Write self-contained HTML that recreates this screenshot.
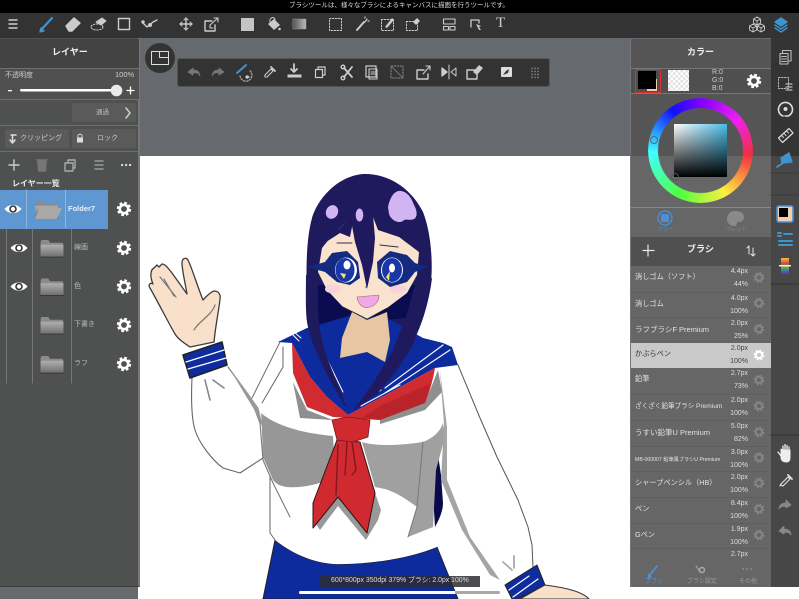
<!DOCTYPE html>
<html><head><meta charset="utf-8"><style>
*{margin:0;padding:0;box-sizing:border-box}
html,body{width:799px;height:599px;overflow:hidden;background:#fff;font-family:"Liberation Sans","Noto Sans CJK JP",sans-serif}
.a{position:absolute}
.t{position:absolute;white-space:nowrap;line-height:1}
svg{position:absolute;left:0;top:0}
.row{position:absolute;left:631px;width:140px;height:25.7px;color:#e2e2e2;border-top:1px solid #5f5f5f}
.row b{position:absolute;left:4px;top:7px;font-weight:normal;font-size:7.2px;white-space:nowrap;line-height:1.2}
.row i{position:absolute;right:23px;font-style:normal;font-size:7px;color:#ddd;line-height:1}
.row i.u{top:2px}.row i.d{top:15px}
.sep{position:absolute;height:1px;background:#6f6f6f}
</style></head><body>
<div class="a" style="left:0;top:38px;width:799px;height:118px;background:#66696e"></div>
<div class="a" style="left:0;top:587px;width:138px;height:12px;background:#666a6e"></div>

<svg width="799" height="599" viewBox="0 0 799 599" stroke-linejoin="round" stroke-linecap="round">
<!-- skirt -->
<path d="M275 540C290 552 310 562 333 564C370 565 410 558 437 547L458 599H263Z" fill="#0d2b9c" stroke="#222" stroke-width="1"/>
<!-- torso -->
<path d="M280 342L262 372L252 398L262 407L270 467L270 533L275 540C290 552 310 562 333 564C370 565 410 558 437 547L445 437L447 370L400 350L340 358Z" fill="#fff"/>
<!-- dark hair strip -->
<path d="M438 455C434 465 433 480 433 495L435 527C440 518 443 510 443 503L441 475Z" fill="#0a0a4a"/>
<!-- gray shade -->
<path d="M261 413C275 425 300 433 333 436L335 470L323 482C310 486 298 488 287 487C280 486 276 484 273 480L263 457Z" fill="#979797"/>
<path d="M362 442C375 446 395 446 423 442C433 438 440 432 443 423L445 437L436 470L433 527L408 537L417 507C405 498 395 492 385 489L375 487Z" fill="#a0a0a0"/>
<path d="M316 524L338 497L367 533L375 493L381 510L378 520L366 540L338 506L320 530Z" fill="#999"/>
<path d="M293 382L307 410L333 420L300 418ZM380 420L425 403L438 370L442 392L425 410L380 424Z" fill="#8f8f8f"/>
<!-- left sleeve -->
<path d="M192 378L193 427L200 443L223 468L240 473L263 458L261 410L227 365Z" fill="#fff"/>
<path d="M192 378C191 400 192 420 195 430C199 443 212 460 223 468L240 473L263 458" fill="none" stroke="#666" stroke-width="1.100"/>
<path d="M228 367L250 397L260 423L263 460L273 483L290 517M252 398L280 342" fill="none" stroke="#777" stroke-width="1.100"/>
<path d="M232 372L258 408L262 425L255 410Z" fill="#999" stroke="#999"/>
<path d="M270 477L270 533L275 540M262 403L283 367L283 347" fill="none" stroke="#666" stroke-width="1"/>
<path d="M205 380L210 400M213 380L224 388" stroke="#888" stroke-width="1.600" fill="none"/>
<!-- right sleeve -->
<path d="M458 365L497 457L528 527L533 567L505 585L470 537L447 480L448 427L440 370Z" fill="#fff"/>
<path d="M458 365L480 418L497 457L518 500L528 527L532 545L533 567" fill="none" stroke="#555" stroke-width="1"/>
<path d="M440 370L447 427L447 480L470 537L500 580L490 575L462 530L441 480L444 425Z" fill="#a5a5a5"/>
<path d="M423 442L417 507L408 537" fill="none" stroke="#777" stroke-width="1"/>
<path d="M503 562L512 570M514 556V568" stroke="#aaa" stroke-width="1.800" fill="none"/>
<!-- right cuff -->
<path d="M505 585L537 565L545 585L518 599H512Z" fill="#0e2c9e" stroke="#222" stroke-width="1"/>
<path d="M509 590L529 576M513 597L538 579" stroke="#fff" stroke-width="1.200" fill="none"/>
<path d="M545 585C560 587 578 590 587 597L589 599H520Z" fill="#f8e0cb" stroke="#333" stroke-width="1"/>
<!-- hand -->
<path d="M190 347C184 343 178 339 175 334C168 322 158 302 150 288C148 285 150 282 153 284C150 277 150 270 154 268L157 265L159 267L162 264C165 264 168 268 172 273L187 294C185 282 182 270 182 263C182 258 186 257 188 260C192 268 198 288 203 300C206 297 210 292 214 291C218 291 221 294 220 299C219 310 216 322 214 342Z" fill="#f8e0cb" stroke="#3c3c3c" stroke-width="1.300"/>
<path d="M160 277L176 297M164 279L174 296M215 305C212 315 198 322 194 330" stroke="#777" stroke-width="1.200" fill="none"/>
<!-- left cuff -->
<path d="M183 355L222 342L227 365L190 378Z" fill="#0e2c9e" stroke="#222" stroke-width="1.600"/>
<path d="M186 362L224 350M188 369L226 358" stroke="#fff" stroke-width="1.200" fill="none"/>

<!-- hair full -->
<path d="M320 365C314 350 309 330 307 300C306 270 306 240 312 218C318 198 338 176 363 174C390 173 412 190 423 212C431 232 433 262 431 282C428 310 418 335 405 358L397 370L318 330Z" fill="#1f1a5e"/>
<path d="M318 285L318 330L352 320L388 320L423 316L420 285Z" fill="#0b0b50"/>
<!-- collar back and body blue -->
<path d="M318 325L352 315L387 318L423 338L443 343L452 347L458 365L435 368L380 398L348 415L327 397L310 377L292 343L278 342L307 328Z" fill="#0d2b9c"/>
<!-- neck -->
<path d="M352 312L342 338L340 358L367 352L385 362L390 340L387 312L367 320Z" fill="#e6c6a4"/>
<!-- red scarf -->
<path d="M292 343L310 377L327 397L348 415L380 398L435 368C432 385 428 396 425 403L380 420L333 417L307 407L293 373Z" fill="#cf2b30"/>
<path d="M380 406L430 384L425 403L380 420L362 418Z" fill="#b8242a"/>
<path d="M322 356L344 402M325 355L343 392M291 333L299 341M294 332L301 338" stroke="#fff" stroke-width="1" fill="none"/>
<path d="M360 402L381 390M361 406L400 385M385 388L443 345M385 393L450 350" stroke="#fff" stroke-width="1.100" fill="none"/>
<!-- tie -->
<path d="M337 440L313 503L313 528L338 497L367 533L375 493L360 442Z" fill="#d02a30" stroke="#2a1418" stroke-width="1"/>
<path d="M347 442L345 475M352 442L356 470L352 475M338 445L336 495" stroke="#7c1a20" stroke-width="1.400" fill="none"/>
<path d="M332 420L348 417L370 420L368 437L353 442L337 440Z" fill="#d02a30" stroke="#7c1a20" stroke-width=".8"/>
<!-- long strands -->
<path d="M306 275C306 295 305 315 308 327C312 345 320 360 330 380L347 410C340 385 326 360 322 340C318 320 316 300 318 275Z" fill="#1f1a5e"/>
<path d="M432 278C430 295 426 308 425 308L413 345L397 370L378 393L353 411L375 380L392 352L405 320L415 285Z" fill="#1f1a5e"/>
<!-- face -->
<path d="M322 248L318 272L327 290L343 307L367 319L387 308L407 293L417 275L419 252L403 240L380 222L373 215L353 215L340 228L330 238Z" fill="#f9e3cf"/>
<path d="M343 307L367 319L387 308" stroke="#332" stroke-width=".7" fill="none"/>
<ellipse cx="333" cy="289" rx="8" ry="4.500" fill="#f6d2da"/>
<ellipse cx="398" cy="289" rx="8" ry="4.500" fill="#f6d2da"/>
<!-- bangs -->
<path d="M350 215L355 242L362 265L367 289L373 262L375 238L373 215L363 205Z" fill="#1f1a5e"/>
<path d="M320 252L320 240L338 230L343 225L355 212L350 237L340 233L323 244Z" fill="#1f1a5e"/>
<path d="M378 230L417 243L418 252L424 235L405 200L373 210L373 217Z" fill="#1f1a5e"/>
<path d="M337 243L352 243M380 245L398 247" stroke="#3a2d3a" stroke-width="1" fill="none"/>
<!-- eyes -->
<path d="M308 267L325 262L332 253L347 251L358 262L360 278L350 285L337 282L325 272Z" fill="#132a80"/>
<path d="M377 262L390 251L407 255L415 263L428 267L415 272L407 282L390 287L378 278Z" fill="#132a80"/>
<ellipse cx="346" cy="270" rx="11" ry="12.500" fill="#fff"/>
<ellipse cx="392" cy="270" rx="11" ry="12.500" fill="#fff"/>
<ellipse cx="345" cy="270" rx="9.500" ry="12" fill="#1a37a8"/>
<ellipse cx="392" cy="270" rx="10" ry="12" fill="#1a37a8"/>
<ellipse cx="347" cy="265" rx="3.500" ry="4.500" fill="#fff"/><ellipse cx="392" cy="268" rx="3" ry="4.500" fill="#fff"/>
<path d="M340 273L346 274L344 279ZM386 277L390 271L389 281Z" fill="#f5e36a"/>
<!-- highlights -->
<path d="M388 207C390 198 394 190 401 191C408 192 412 199 414 205C417 210 418 217 414 219C410 221 405 218 403 221C398 224 391 220 389 214Z" fill="#d3b4f2"/>
<ellipse cx="332" cy="212" rx="6" ry="7" transform="rotate(25 332 212)" fill="#d3b4f2"/>
<ellipse cx="359.500" cy="215" rx="3.800" ry="6.500" fill="#d3b4f2"/>
<!-- mouth & nose -->
<path d="M357 297L379 295C379 301 375 306 370 307C364 309 358 305 357 297Z" fill="#f0a8e6" stroke="#b05a6a" stroke-width=".6"/>
<circle cx="366" cy="287" r=".7" fill="#444"/>
</svg>

<!-- left panel -->
<div class="a" style="left:0;top:38px;width:140px;height:549px;background:#4f5050;border-right:2px solid #777;border-bottom:1px solid #3a3a3a"></div>
<div class="a" style="left:0;top:39px;width:139px;height:29px;background:#434343"></div>
<div class="a" style="left:0;top:69px;width:139px;height:30px;background:#505050"></div>
<div class="sep" style="left:0;top:68px;width:139px"></div>
<div class="sep" style="left:0;top:99px;width:139px"></div>
<div class="sep" style="left:0;top:125px;width:139px"></div>
<div class="sep" style="left:0;top:151px;width:139px"></div>
<div class="a" style="left:72px;top:103px;width:64px;height:19px;background:#5a5a5a;border-radius:2px"></div>
<div class="a" style="left:5px;top:129px;width:64px;height:19px;background:#5a5a5a;border-radius:2px"></div>
<div class="a" style="left:72px;top:129px;width:64px;height:19px;background:#5a5a5a;border-radius:2px"></div>
<div class="a" style="left:0;top:190px;width:108px;height:38.500px;background:#5f98d1"></div>

<!-- top bars -->
<div class="a" style="left:0;top:0;width:799px;height:13px;background:#000"></div>
<div class="a" style="left:0;top:13px;width:799px;height:25px;background:#333"></div>
<div class="a" style="left:771px;top:38px;width:28px;height:118px;background:#343434"></div>
<div class="a" style="left:771px;top:156px;width:28px;height:431px;background:#474747"></div>
<!-- floating -->
<div class="a" style="left:178px;top:59px;width:371px;height:27px;background:#333;border-radius:2px;box-shadow:0 0 0 1px #555"></div>
<div class="a" style="left:145px;top:43px;width:30px;height:30px;background:#333;border-radius:50%"></div>

<!-- right panel -->
<div class="a" style="left:631px;top:39px;width:140px;height:117px;background:#555"></div>
<div class="a" style="left:631px;top:156px;width:140px;height:81px;background:#666"></div>
<div class="a" style="left:631px;top:237px;width:140px;height:29px;background:#505050"></div>
<div class="a" style="left:631px;top:266px;width:140px;height:321px;background:#666"></div>
<div class="a" style="left:631px;top:68px;width:140px;height:25px;background:#4f4f4f"></div>
<div class="sep" style="left:631px;top:68px;width:140px;background:#777"></div>
<div class="sep" style="left:631px;top:93px;width:140px;background:#777"></div>
<div class="sep" style="left:631px;top:207px;width:140px;background:#888"></div>
<div class="a" style="left:630px;top:38px;width:1px;height:549px;background:#777"></div>
<!-- wheel -->
<div class="a" style="left:648px;top:98px;width:105px;height:105px;border-radius:50%;background:conic-gradient(#8000ff 0deg,#f020f0 50deg,#f03040 95deg,#ffee40 150deg,#50ff40 205deg,#40ffff 268deg,#1010ff 325deg,#8000ff 360deg);-webkit-mask:radial-gradient(circle,transparent 42px,#000 43px);mask:radial-gradient(circle,transparent 42px,#000 43px)"></div>
<div class="a" style="left:674px;top:124px;width:53px;height:53px;background:linear-gradient(to bottom,rgba(0,0,0,0),#000),linear-gradient(to right,#fff,#49bde8)"></div>
<div class="a" style="left:650px;top:136px;width:8px;height:8px;border:1.500px solid #666;border-radius:50%"></div>
<div class="a" style="left:671px;top:173px;width:8px;height:8px;border:1.500px solid #555;border-radius:50%"></div>
<!-- swatches -->
<div class="a" style="left:635px;top:69px;width:26px;height:24px;border:1px solid #e03030;border-radius:1px"></div>
<div class="a" style="left:647px;top:79px;width:10px;height:12px;background:#f0cfb0"></div>
<div class="a" style="left:638px;top:71px;width:18px;height:18px;background:#000"></div>
<div class="a" style="left:668px;top:70px;width:21px;height:21px;background-color:#fff;background-image:repeating-conic-gradient(#e2e2e2 0 25%,#fff 0 50%);background-size:5px 5px"></div>

<!-- brush rows -->
<div class="row" style="top:266px;border:0"><b>消しゴム（ソフト）</b><i class="u">4.4px</i><i class="d">44%</i></div>
<div class="row" style="top:291.700px"><b>消しゴム</b><i class="u">4.0px</i><i class="d">100%</i></div>
<div class="row" style="top:317px"><b style="font-size:7.500px">ラフブラシF Premium</b><i class="u">2.0px</i><i class="d">25%</i></div>
<div class="row" style="top:342.500px;background:#c9c9c9;color:#333;border:0"><b>かぶらペン</b><i class="u" style="color:#444">2.0px</i><i class="d" style="color:#444">100%</i></div>
<div class="row" style="top:368px;border:0"><b>鉛筆</b><i class="u">2.7px</i><i class="d">73%</i></div>
<div class="row" style="top:394px"><b style="font-size:6.600px;top:8px">ざくざく鉛筆ブラシ Premium</b><i class="u">2.0px</i><i class="d">100%</i></div>
<div class="row" style="top:419.500px"><b style="font-size:7.500px">うすい鉛筆U Premium</b><i class="u">5.0px</i><i class="d">82%</i></div>
<div class="row" style="top:445.500px"><b style="font-size:5.200px;top:10px">MB-000007 鉛筆風ブラシU Premium</b><i class="u">3.0px</i><i class="d">100%</i></div>
<div class="row" style="top:471px"><b>シャープペンシル（HB）</b><i class="u">2.0px</i><i class="d">100%</i></div>
<div class="row" style="top:497px"><b>ペン</b><i class="u">8.4px</i><i class="d">100%</i></div>
<div class="row" style="top:522.500px"><b>Gペン</b><i class="u">1.9px</i><i class="d">100%</i></div>
<div class="row" style="top:548px;height:12px"><i class="u">2.7px</i></div>
<div class="a" style="left:631px;top:560px;width:140px;height:27px;background:#666"></div>

<!-- icons -->
<svg width="799" height="599" viewBox="0 0 799 599" stroke-linecap="round" stroke-linejoin="round">
<defs>
<symbol id="g" viewBox="-8 -8 16 16" overflow="visible"><circle r="4.200" fill="none" stroke="currentColor" stroke-width="2.600" stroke-linecap="butt"/><circle r="6.200" fill="none" stroke="currentColor" stroke-width="2" stroke-dasharray="2.800 2.070" stroke-linecap="butt"/></symbol>
<symbol id="f" viewBox="0 0 26 20"><path d="M1 3L2 1H9L11 4H24L25 6V18L24 19H2L1 18Z" fill="#8b8b8b"/><path d="M1 6H25V18L24 19H2L1 18Z" fill="url(#fg)"/><path d="M1 19H25" stroke="#333" stroke-width="1"/></symbol>
<linearGradient id="fg" x1="0" y1="0" x2="0" y2="1"><stop offset="0" stop-color="#b0b0b0"/><stop offset="1" stop-color="#6e6e6e"/></linearGradient>
<symbol id="e" viewBox="-10 -6 20 12" overflow="visible"><path d="M-8.500 0C-4-5.500 4-5.500 8.500 0C4 5.500-4 5.500-8.500 0Z" fill="#fff"/><circle r="3.800" fill="#333"/><circle r="2.200" fill="#fff"/></symbol>
</defs>
<g fill="none" stroke="#ccc" stroke-width="1.400">
<!-- toolbar -->
<path d="M9 20H17M9 24H17M9 28H17"/>
<path d="M41 30L52 18" stroke="#3f93cd" stroke-width="2.200"/><path d="M41 28L44 31L40 32Z" fill="#3f93cd" stroke="#3f93cd"/>
<path d="M66 26L74 18L80 23L72 31H69Z" fill="#ccc"/>
<path d="M96 22L102 18L106 21L101 25Z" fill="#ccc" stroke-width="1"/><ellipse cx="97" cy="27" rx="6" ry="3" stroke-dasharray="1.500 1.500" stroke-width="1"/>
<rect x="118.500" y="18.500" width="11" height="11"/>
<path d="M143 23L147 27L153 22L157 20"/><circle cx="143" cy="22" r="1" fill="#ccc"/><circle cx="150" cy="25" r="1.300" fill="#ccc"/>
<path d="M186 18V30M180 24H192"/><path d="M184 20L186 18L188 20M184 28L186 30L188 28M182 22L180 24L182 26M190 22L192 24L190 26" stroke-width="1"/>
<path d="M205 21H212M205 21V31H215V25M205.500 31H215"/><path d="M210 25L218 18M214 18H218V22M210 25V28H213" stroke-width="1.100"/>
<path d="M268 24L274 19L280 25L274 30Z" fill="#ccc" stroke="none"/><path d="M270 22C269 17 275 16 275 20" stroke-width="1"/><circle cx="279.500" cy="29" r="1.300" fill="#ccc" stroke="none"/>
<rect x="329.500" y="18.500" width="12" height="12" stroke-dasharray="1.500 1.500" stroke-width="1"/>
<path d="M357 30L364 22" stroke-width="2"/><path d="M365 18L365 17M368 21L369 21M365 22L367 19" stroke-width="1.200"/>
<rect x="381.500" y="19.500" width="12" height="11" stroke-dasharray="1.500 1.500" stroke-width="1"/><path d="M385 27L392 18L394 20L387 28Z" fill="#ccc" stroke="none"/>
<rect x="406.500" y="21.500" width="11" height="9" stroke-dasharray="1.500 1.500" stroke-width="1"/><path d="M413 22L417 18L420 21L416 25Z" fill="#ccc" stroke="none"/>
<path d="M443.500 19H455V24H443.500ZM443.500 26.500H448.500V30H443.500ZM450 26.500H455V30H450Z" stroke-width="1.100"/>
<path d="M471 27V20H479V23" stroke-width="1.300"/><path d="M476 24L481 26L479 27L481 30L479 30Z" fill="#ccc" stroke="none"/>
<g stroke-width=".9"><path d="M757 17L760.500 19V23L757 25L753.500 23V19ZM753.500 19L757 21L760.500 19M757 21V25"/><path d="M753 24L756.500 26V30L753 32L749.500 30V26ZM749.500 26L753 28L756.500 26M753 28V32"/><path d="M761 24L764.500 26V30L761 32L757.500 30V26ZM757.500 26L761 28L764.500 26M761 28V32"/></g>
<path d="M775 22L781 18L787 22L781 26Z" stroke="#3f93cd" fill="#3f93cd"/><path d="M775 25L781 29L787 25M775 28L781 32L787 28" stroke="#3f93cd"/>
<!-- floating toolbar -->
<path d="M193 68L188 72L193 75V73C197 72 199 73 200 76C199 71 197 70 193 70Z" fill="#777" stroke="#777" stroke-width=".8"/>
<path d="M219 68L224 72L219 75V73C215 72 213 73 212 76C213 71 215 70 219 70Z" fill="#777" stroke="#777" stroke-width=".8"/>
<path d="M237 73L246 65" stroke="#3f93cd" stroke-width="2"/><path d="M240 76A6 6 0 1 0 249 70" stroke-dasharray="1.500 1.500" stroke-width="1.200" stroke="#aaa"/><path d="M247 75L250 77L247 79L245 77Z" fill="#ccc" stroke="none"/>
<path d="M265 77V75L271 69L273 71L267 77Z" stroke-width="1.100"/><path d="M271 67L275 71" stroke-width="1.800"/>
<path d="M294 64V71M291 69L294 72L297 69" stroke-width="1.800"/><rect x="287.500" y="74.500" width="14" height="3" fill="#ccc" stroke="none"/>
<rect x="315.500" y="69.500" width="7" height="8" stroke-width="1.200"/><path d="M318 69V67H325V75H323" stroke-width="1.200"/>
<circle cx="343" cy="78" r="1.800" stroke-width="1.400"/><circle cx="343" cy="67" r="1.800" stroke-width="1.400"/><path d="M344 68L352 77M344 77L352 67" stroke-width="1.800"/>
<rect x="366" y="66" width="10" height="11" stroke-width="1.200"/><path d="M369 69H377V79H369ZM371 72H375M371 74H375" stroke-width="1.100"/>
<path d="M391 66H403V78H391Z" stroke-dasharray="1.500 1.500" stroke="#888" stroke-width="1"/><path d="M391 66L403 78" stroke="#777" stroke-width="1"/>
<path d="M417 70H424M417 70V79H428V74"/><path d="M423 74L430 66M426 66H430V70" stroke-width="1.100"/>
<path d="M442 68V76L447 72Z" fill="#ccc"/><path d="M449 65V79" stroke-width="1"/><path d="M456 68V76L451 72Z" stroke-width="1"/>
<path d="M467 70H476M467 70V79H477V74"/><path d="M473 72L479 65L483 68L477 75Z" fill="#ccc" stroke="none"/>
<rect x="501" y="67" width="11" height="10" rx="1" fill="#ddd" stroke="none"/><path d="M503 75L506 71L509 69L508 73Z" fill="#333" stroke="none"/>
<g stroke="#aaa" stroke-width="1" stroke-dasharray=".8 2.200"><path d="M532 68V78M535 68V78M538 68V78"/></g>
<rect x="151.500" y="51.500" width="17" height="13" stroke="#ddd" stroke-width="1"/><rect x="159.500" y="51.500" width="9" height="6" stroke="#ddd" stroke-width="1"/>
<!-- left panel icons -->
<path d="M126 108L130 113L126 118" stroke-width="1.500"/>
<path d="M14 160V170M9 165H19"/>
<path d="M38 161H46L45.500 171H38.500ZM37 160H47" fill="#777" stroke="#777"/>
<path d="M65 163H73V171H65ZM68 163V160H75V168H73" stroke="#aaa"/>
<path d="M95 161H103M95 165H103M95 169H103" stroke="#999"/>
<path d="M122 165H122.200M126 165H126.200M130 165H130.200" stroke-width="2.200" stroke="#ddd"/>
<path d="M11 135H16M12.500 135V142M10 140L12.500 143L15 140" stroke="#ddd" stroke-width="1.500"/>
<rect x="77" y="137.500" width="6" height="5" fill="#ddd" stroke="none"/><path d="M78 137V135.500C78 133.800 82 133.800 82 135.500V137" stroke-width="1"/>
<!-- right panel -->
<path d="M648 245V256M643 250.500H654" stroke="#e8e8e8" stroke-width="1.200"/>
<path d="M749 246V254M747 248L749 246M753 248V256L755 254M751 254L753 256" stroke="#e8e8e8" stroke-width="1"/>
<circle cx="665" cy="218" r="7" stroke="#4a90d9" stroke-width="1.300"/><rect x="661" y="214" width="8" height="8" rx="1" fill="#4a90d9" stroke="none"/>
<path d="M735 211C729 211 727 216 727 219C727 224 731 226 735 226C737 226 736 223 738 222C742 222 744 220 744 217C744 213 740 211 735 211Z" fill="#8a8a8a" stroke="none"/>
<path d="M649 576L657 566" stroke="#4a90d9" stroke-width="1.800"/><path d="M649 574L651 577L648 579Z" fill="#4a90d9" stroke="#4a90d9"/>
<path d="M696 566L700 572" stroke="#aaa" stroke-width="1.100"/><circle cx="702" cy="570" r="2.500" stroke="#aaa"/>
<path d="M743 569H743.200M747 569H747.200M751 569H751.200" stroke="#aaa" stroke-width="1.300"/>
<!-- sidebar -->
<path d="M780 53.500V64H788V53.500ZM782.500 53.500V50.500H791V61H788" stroke="#bbb" stroke-width="1.100"/><path d="M781.500 56.500H786.500M781.500 59H786.500M781.500 61.500H786.500" stroke="#bbb" stroke-width=".9"/>
<rect x="778.500" y="77.500" width="10" height="11" stroke="#bbb" stroke-dasharray="1.500 1.500" stroke-width="1"/><path d="M786 84H792M786 87H792M786 90H792" stroke="#bbb" stroke-width="1.200"/>
<path d="M789 115.500A7 7 0 1 0 783 116" stroke="#ddd" stroke-width="1.600"/><circle cx="785.500" cy="109" r="2" fill="#ddd" stroke="none"/><path d="M785 116H788.500" stroke="#ddd"/>
<path d="M778.500 138L789 128.500L793 133L782.500 142.500Z" stroke="#ddd" stroke-width="1.200"/><path d="M782 136L783.500 137.500M784.500 134L786 135.500M787 131.500L788.500 133" stroke="#ddd" stroke-width=".9"/>
<path d="M781 158L789 153L792 162L782 163Z" fill="#3f93cd" stroke="#3f93cd"/><path d="M777 167L783 163" stroke="#3f93cd" stroke-width="1.800"/>
<path d="M771 173H799" stroke="#3e3e3e"/><path d="M771 195H799" stroke="#3e3e3e"/>
<rect x="777" y="206" width="16" height="16" rx="2" fill="#f0cfb0" stroke="#4a90d9" stroke-width="1.600"/><rect x="779" y="208" width="9" height="9" fill="#000" stroke="none"/>
<path d="M778 233H781M778 236H781" stroke="#3f93cd" stroke-width="2"/><path d="M784 234H792M779 241H792M779 245H792" stroke="#3f93cd" stroke-width="2"/>
<path d="M771 284H799M771 435H799" stroke="#3a3a3a"/>
<path d="M781 449V458C781 460 783 462 786 462C789 462 790 460 790 458V450" stroke="#eee" fill="#eee" stroke-width="1"/><path d="M783 457V446M785 457V444.500M787 457V445.500M789 457V447M781 456L778 452" stroke="#eee" stroke-width="1.300"/>
<path d="M781 485L780 486L781 484L788 477L790 479L783 486Z" stroke="#ddd" stroke-width="1.200"/><path d="M788 475L792 479" stroke="#ddd" stroke-width="1.800"/>
<path d="M786 500L791 505L786 508V506.500C782 506 780 507 779 509C779 505 782 503 786 503Z" fill="#888" stroke="#888" stroke-width=".8"/>
<path d="M784 526L779 531L784 534V532.500C788 532 790 533 791 535C791 531 788 529 784 529Z" fill="#888" stroke="#888" stroke-width=".8"/>
</g>
<!-- rainbow -->
<defs><linearGradient id="rb" x1="0" y1="0" x2="0" y2="1"><stop offset="0" stop-color="#f0c040"/><stop offset=".35" stop-color="#e04040"/><stop offset=".55" stop-color="#50c050"/><stop offset="1" stop-color="#5030d0"/></linearGradient></defs>
<rect x="781" y="258" width="8" height="16" fill="url(#rb)"/><rect x="779" y="265" width="12" height="1.500" fill="#eee"/>
<!-- bucket & squares -->
<rect x="241" y="18" width="13" height="13" fill="#c4c4c4"/>
<defs><linearGradient id="gr"><stop offset="0" stop-color="#555"/><stop offset="1" stop-color="#bbb"/></linearGradient></defs>
<rect x="293" y="19" width="13" height="10" fill="url(#gr)" stroke="#999" stroke-width=".5"/>
<!-- gears -->
<g color="#fff">
<use href="#g" x="116" y="201" width="16" height="16"/><use href="#g" x="116" y="240" width="16" height="16"/><use href="#g" x="116" y="278.500" width="16" height="16"/><use href="#g" x="116" y="317" width="16" height="16"/><use href="#g" x="116" y="356" width="16" height="16"/>
<use href="#g" x="746" y="73" width="16" height="16"/>
</g>
<g color="#848484">
<use href="#g" x="753" y="271.500" width="12" height="12"/><use href="#g" x="753" y="297" width="12" height="12"/><use href="#g" x="753" y="323" width="12" height="12"/>
<use href="#g" x="753" y="374" width="12" height="12"/><use href="#g" x="753" y="400" width="12" height="12"/><use href="#g" x="753" y="426" width="12" height="12"/><use href="#g" x="753" y="451.500" width="12" height="12"/><use href="#g" x="753" y="477" width="12" height="12"/><use href="#g" x="753" y="503" width="12" height="12"/><use href="#g" x="753" y="529" width="12" height="12"/>
</g>
<use href="#g" x="753" y="349" width="12" height="12" color="#fff"/>
<!-- eyes -->
<use href="#e" x="3" y="203" width="20" height="12"/><use href="#e" x="9" y="242" width="20" height="12"/><use href="#e" x="9" y="280.500" width="20" height="12"/>
<!-- folders -->
<use href="#f" x="33" y="200" width="27" height="19"/>
<path d="M35 218L40 208H62L57 219H35Z" fill="#a8a8a8"/>
<use href="#f" x="39" y="239" width="26" height="19"/><use href="#f" x="39" y="277.500" width="26" height="19"/><use href="#f" x="39" y="316" width="26" height="19"/><use href="#f" x="39" y="355" width="26" height="19"/>
<!-- layer tree lines -->
<g stroke="#777" stroke-width="1"><path d="M6.500 229V383M32.500 229V383M71.500 229V383"/></g>
<g stroke="#8db5dd" stroke-width="1"><path d="M26.500 190V228M65.500 190V228"/></g>
<!-- slider -->
<rect x="20" y="89" width="97" height="2.500" rx="1.200" fill="#fff"/><circle cx="116.500" cy="90.500" r="5.800" fill="#e8eaec"/>
<rect x="8" y="90" width="4" height="1.300" fill="#fff"/><path d="M127 90.500H134M130.500 87V94" stroke="#fff" stroke-width="1.300"/>
</svg>

<!-- text -->
<div class="t" style="left:289px;top:3px;font-size:6.500px;color:#ddd">ブラシツールは、様々なブラシによるキャンバスに描画を行うツールです。</div>
<div class="t" style="left:496px;top:16px;font-size:15px;font-family:'Liberation Serif',serif;color:#ccc">T</div>
<div class="t" style="left:52px;top:48px;font-size:9px;font-weight:bold;color:#eee">レイヤー</div>
<div class="t" style="left:5px;top:71.500px;font-size:7px;color:#ccc">不透明度</div>
<div class="t" style="left:115px;top:71px;font-size:7.500px;color:#ccc">100%</div>
<div class="t" style="left:96px;top:110px;font-size:6.500px;color:#bbb">通過</div>
<div class="t" style="left:20px;top:134.500px;font-size:7px;color:#ccc">クリッピング</div>
<div class="t" style="left:97px;top:134.500px;font-size:7px;color:#ccc">ロック</div>
<div class="t" style="left:12px;top:180px;font-size:8px;font-weight:bold;color:#e8e8e8">レイヤー一覧</div>
<div class="t" style="left:68px;top:205px;font-size:7.500px;font-weight:bold;color:#e8f0f8">Folder7</div>
<div class="t" style="left:74px;top:244px;font-size:7px;color:#bbb">線画</div>
<div class="t" style="left:74px;top:283px;font-size:7px;color:#bbb">色</div>
<div class="t" style="left:74px;top:321px;font-size:7px;color:#bbb">下書き</div>
<div class="t" style="left:74px;top:360px;font-size:7px;color:#bbb">ラフ</div>
<div class="t" style="left:687px;top:48px;font-size:9px;font-weight:bold;color:#eee">カラー</div>
<div class="t" style="left:712px;top:69px;font-size:7px;color:#ccc;line-height:8px;white-space:pre">R:0
G:0
B:0</div>
<div class="t" style="left:687px;top:245px;font-size:9px;font-weight:bold;color:#eee">ブラシ</div>
<div class="t" style="left:657px;top:228px;font-size:5.500px;color:#4a90d9">カラー</div>
<div class="t" style="left:725px;top:228px;font-size:5.500px;color:#858585">パレット</div>
<div class="t" style="left:645px;top:579px;font-size:6px;color:#4a90d9">ブラシ</div>
<div class="t" style="left:687px;top:579px;font-size:6px;color:#999">ブラシ設定</div>
<div class="t" style="left:739px;top:579px;font-size:6px;color:#999">その他</div>

<!-- status -->
<div class="a" style="left:319px;top:576px;width:161px;height:11px;background:rgba(45,45,50,.85)"></div>
<div class="t" style="left:331px;top:578px;font-size:6.900px;color:#ddd">600*800px 350dpi 379% ブラシ: 2.0px 100%</div>
<div class="a" style="left:299px;top:591px;width:156px;height:3px;background:#fff;border-radius:2px 0 0 2px"></div>
<div class="a" style="left:455px;top:591px;width:45px;height:3px;background:#a8a8a8;border-radius:0 2px 2px 0"></div>
</body></html>
